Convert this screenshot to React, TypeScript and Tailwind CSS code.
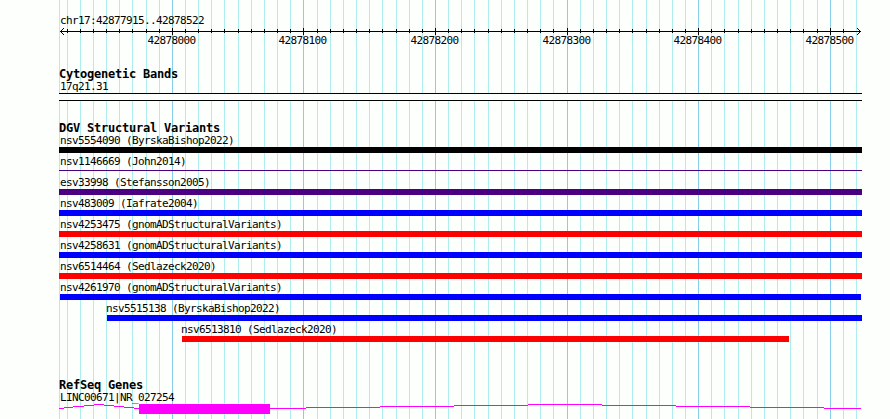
interface Variant {
  label: string;
  start: number;
  end: number;
  color: string;
  thin?: boolean;
}

const WIDTH = 890;
const HEIGHT = 419;
const LEFT = 59;

const minorTicks = [
  67, 80, 93, 106, 119, 132, 146, 159, 185, 198, 211, 224, 238, 251, 264, 277,
  290, 317, 330, 343, 356, 369, 382, 396, 409, 422, 448, 461, 474, 488, 501,
  514, 527, 540, 553, 580, 593, 606, 619, 632, 646, 659, 672, 685, 711, 724,
  738, 751, 764, 777, 790, 803, 817, 843, 856,
];

const majorTicks = [
  { x: 172, label: "42878000" },
  { x: 303, label: "42878100" },
  { x: 435, label: "42878200" },
  { x: 567, label: "42878300" },
  { x: 698, label: "42878400" },
  { x: 830, label: "42878500" },
];

const variants: Variant[] = [
  { label: "nsv5554090 (ByrskaBishop2022)", start: 59, end: 862, color: "bg-black" },
  { label: "nsv1146669 (John2014)", start: 59, end: 862, color: "bg-[#4b0082]", thin: true },
  { label: "esv33998 (Stefansson2005)", start: 59, end: 862, color: "bg-[#4b0082]" },
  { label: "nsv483009 (Iafrate2004)", start: 59, end: 862, color: "bg-[#0000ff]" },
  { label: "nsv4253475 (gnomADStructuralVariants)", start: 59, end: 862, color: "bg-[#ff0000]" },
  { label: "nsv4258631 (gnomADStructuralVariants)", start: 59, end: 862, color: "bg-[#0000ff]" },
  { label: "nsv6514464 (Sedlazeck2020)", start: 59, end: 862, color: "bg-[#ff0000]" },
  { label: "nsv4261970 (gnomADStructuralVariants)", start: 60, end: 861, color: "bg-[#0000ff]" },
  { label: "nsv5515138 (ByrskaBishop2022)", start: 107, end: 862, color: "bg-[#0000ff]" },
  { label: "nsv6513810 (Sedlazeck2020)", start: 182, end: 789, color: "bg-[#ff0000]" },
];

// [x start, x end, y] of each intron step, relative to the gene track
const intronSteps = [
  [59, 64, 4],
  [64, 73, 3],
  [73, 84, 2],
  [84, 94, 1],
  [94, 104, 0],
  [104, 114, 1],
  [114, 124, 2],
  [124, 134, 3],
  [134, 139, 4],
  [270, 306, 4],
  [306, 380, 3],
  [380, 454, 2],
  [454, 528, 1],
  [528, 602, 0],
  [602, 676, 1],
  [676, 750, 2],
  [750, 824, 3],
  [824, 861, 4],
];

function GridLines() {
  return (
    <svg
      className="absolute inset-0"
      width={WIDTH}
      height={HEIGHT}
      shapeRendering="crispEdges"
    >
      {[LEFT, ...minorTicks].map((x) => (
        <rect key={x} x={x} y={0} width={1} height={HEIGHT} fill="#afeeee" />
      ))}
      {majorTicks.map(({ x }) => (
        <rect key={x} x={x} y={0} width={1} height={HEIGHT} fill="#87ceeb" />
      ))}
    </svg>
  );
}

function Ruler() {
  return (
    <svg
      className="block"
      width={WIDTH}
      height={22}
      shapeRendering="crispEdges"
    >
      <rect x={60} y={4} width={801} height={1} />
      {[1, 2, 3].map((d) => (
        <g key={d}>
          <rect x={60 + d} y={4 - d} width={1} height={1} />
          <rect x={60 + d} y={4 + d} width={1} height={1} />
          <rect x={860 - d} y={4 - d} width={1} height={1} />
          <rect x={860 - d} y={4 + d} width={1} height={1} />
        </g>
      ))}
      {minorTicks.slice(0, -1).map((x) => (
        <rect key={x} x={x} y={2} width={1} height={4} />
      ))}
      {majorTicks.map(({ x, label }) => (
        <g key={x}>
          <rect x={x} y={1} width={1} height={7} />
          <text x={x - 24.5} y={17}>
            {label}
          </text>
        </g>
      ))}
    </svg>
  );
}

function TrackTitle({ children }: { children: string }) {
  return (
    <h2 className="h-3 pl-[59px] text-[12px] leading-3 font-bold tracking-[-0.224px]">
      {children}
    </h2>
  );
}

function VariantRow({ label, start, end, color, thin }: Variant) {
  return (
    <div className="h-[21px]">
      <div className="h-[13px]" style={{ paddingLeft: Math.max(60, start - 1) }}>
        {label}
      </div>
      <div className={`h-1.5 ${thin ? "pt-0.5" : ""}`}>
        <div
          className={`${color} ${thin ? "h-px" : "h-full"}`}
          style={{ marginLeft: start, width: end - start }}
        />
      </div>
    </div>
  );
}

function GeneModel() {
  return (
    <svg
      className="block"
      width={WIDTH}
      height={10}
      fill="#ff00ff"
      shapeRendering="crispEdges"
    >
      {intronSteps.map(([x1, x2, y]) => (
        <rect key={x1} x={x1} y={y} width={x2 - x1} height={1} />
      ))}
      <rect x={139} y={0} width={131} height={10} />
    </svg>
  );
}

export default function App() {
  return (
    <main className="relative h-[419px] w-[890px] overflow-hidden bg-[#fcfffc] font-['DejaVu_Sans_Mono',monospace] text-[11px] leading-[13px] tracking-[-0.622px] whitespace-pre text-black">
      <GridLines />
      <div className="relative flex flex-col pt-3.5">
        <div className="h-[13px] pl-[60px]">chr17:42877915..42878522</div>
        <Ruler />

        <section className="pt-[19px]">
          <TrackTitle>Cytogenetic Bands</TrackTitle>
          <div className="h-[13px] pl-[60px]">17q21.31</div>
          <div className="ml-[59px] h-2 w-[803px] border-y border-black bg-[#fcfffc]" />
        </section>

        <section className="pt-[21px]">
          <TrackTitle>DGV Structural Variants</TrackTitle>
          {variants.map((variant) => (
            <VariantRow key={variant.label} {...variant} />
          ))}
        </section>

        <section className="pt-[35px]">
          <TrackTitle>RefSeq Genes</TrackTitle>
          <div className="h-[13px] pl-[60px]">LINC00671|NR_027254</div>
          <GeneModel />
        </section>
      </div>
    </main>
  );
}
